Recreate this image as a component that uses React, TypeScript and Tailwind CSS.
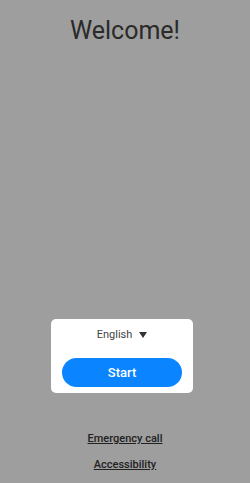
export default function App() {
  return (
    <div className="flex h-[483px] w-[250px] flex-col items-center bg-[#9e9e9e] font-['Roboto',sans-serif]">
      <h1 className="mt-[16px] text-[25px] leading-[30px] text-[#2a2a2a]">Welcome!</h1>

      <div className="flex-1" />

      <div className="mr-[6px] flex w-[142px] flex-col items-center rounded-[5px] bg-white px-[11px] pb-[6px] pt-[9px]">
        <button className="flex items-center gap-[7px] text-[11px] leading-[14px] text-[#444]">
          English
          <svg width="8" height="6" viewBox="0 0 8 6">
            <path d="M0 0 H8 L4 6 Z" fill="#333" />
          </svg>
        </button>
        <button className="mt-[16px] h-[29px] w-full rounded-full bg-[#0a84ff] text-[13px] font-medium text-white">
          Start
        </button>
      </div>

      <div className="mb-[11px] mt-[38px] flex flex-col items-center gap-[11px]">
        <a className="text-[11px] font-medium leading-[15px] text-[#222] underline">Emergency call</a>
        <a className="text-[11px] font-medium leading-[15px] text-[#222] underline">Accessibility</a>
      </div>
    </div>
  );
}
